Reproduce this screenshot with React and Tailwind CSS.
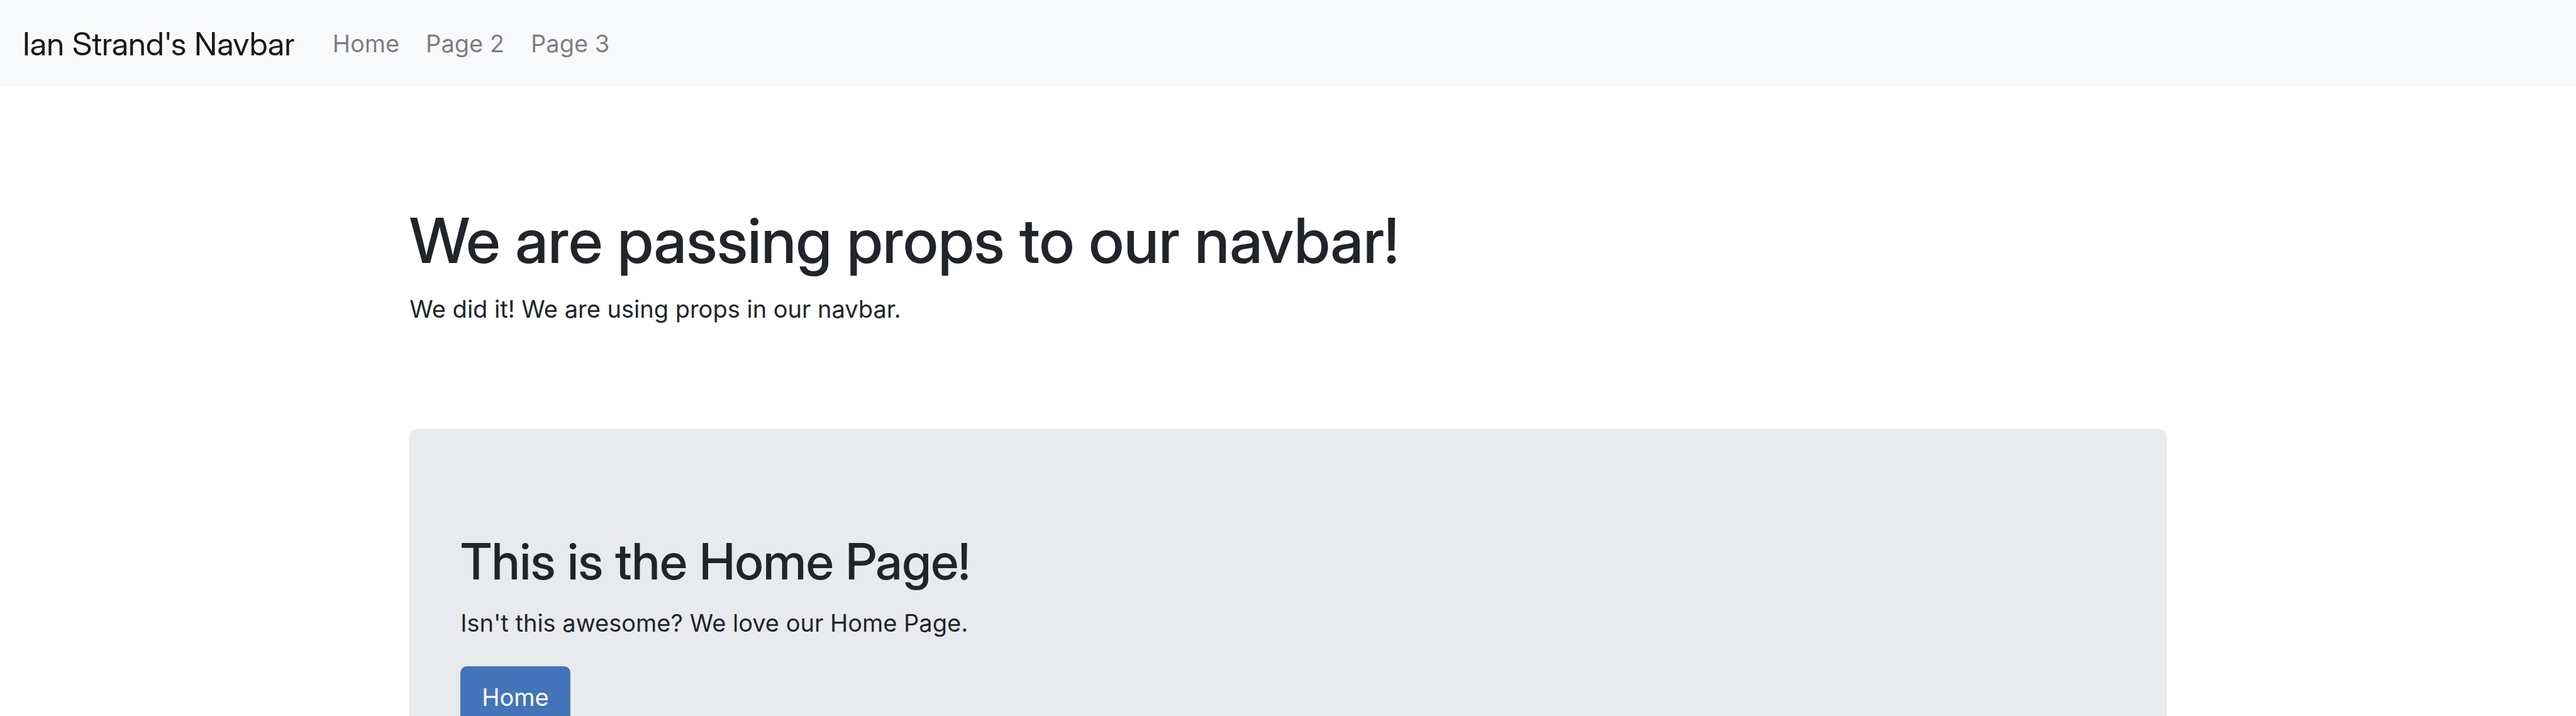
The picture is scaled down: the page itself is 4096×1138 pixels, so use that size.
const links = ["Home", "Page 2", "Page 3"];

export default function App() {
  return (
    <div className="h-screen overflow-hidden bg-white font-[Inter,sans-serif] text-[38px] leading-[59px] text-[#212529]">
      <nav className="flex h-[138px] items-center bg-[#f8f9fb] px-[36px]">
        <a href="#" className="mr-[60px] font-['Inter_Display',Inter,sans-serif] text-[51px] text-black/90">Ian Strand's Navbar</a>
        <ul className="flex gap-[42px] text-black/50">
          {links.map((l) => (
            <li key={l}><a href="#">{l}</a></li>
          ))}
        </ul>
      </nav>
      <main className="mx-auto w-[68.2%]">
        <header className="pt-[185px] pb-[161px]">
          <h1 className="font-['Inter_Display',Inter,sans-serif] text-[99px] leading-[118px] font-medium">We are passing props to our navbar!</h1>
          <p className="mt-[21px]">We did it! We are using props in our navbar.</p>
        </header>
        <section className="rounded-[12px] bg-[#e9eaee] px-[81px] py-[162px]">
          <h2 className="font-['Inter_Display',Inter,sans-serif] text-[80px] leading-[96px] font-medium">This is the Home Page!</h2>
          <p className="mt-[21px]">Isn't this awesome? We love our Home Page.</p>
          <button className="mt-[39px] rounded-[10px] bg-[#4474b9] px-[34px] py-[20px] text-white">Home</button>
        </section>
      </main>
    </div>
  );
}
